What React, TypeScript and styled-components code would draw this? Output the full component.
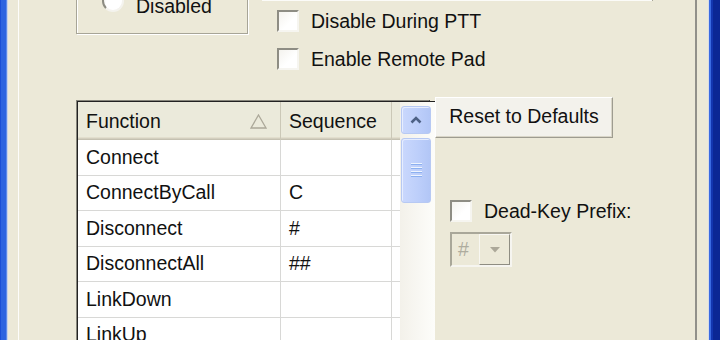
import styled, { createGlobalStyle } from 'styled-components'

const GlobalStyle = createGlobalStyle`
  html, body {
    margin: 0;
    padding: 0;
    background: #ece9d8;
  }
  body {
    font-family: "Liberation Sans", Arial, sans-serif;
    font-size: 19.5px;
    color: #111;
  }
`

const rows = [
  { name: 'Connect', seq: '' },
  { name: 'ConnectByCall', seq: 'C' },
  { name: 'Disconnect', seq: '#' },
  { name: 'DisconnectAll', seq: '##' },
  { name: 'LinkDown', seq: '' },
  { name: 'LinkUp', seq: '' },
]

export default function App() {
  return <>
    <GlobalStyle />
    <Window>
      <LeftFrame />
      <Client>
        <TabPage>
          <TopRow>
            <GroupBox>
              <RadioRow>
                <Radio />
                <Label $shift={5}>Disabled</Label>
              </RadioRow>
            </GroupBox>

            <OptionsGroup>
              <GroupEdge />
              <CheckList>
                <CheckRow>
                  <CheckBox />
                  <Label>Disable During PTT</Label>
                </CheckRow>
                <CheckRow>
                  <CheckBox />
                  <Label>Enable Remote Pad</Label>
                </CheckRow>
              </CheckList>
            </OptionsGroup>
          </TopRow>

          <BottomRow>
            <ListFrame>
              <ListInner>
                <ListBody>
                  <Header>
                    <HeaderCell $divider>
                      Function
                      <SortArrow width="17" height="15" viewBox="0 0 17 15">
                        <polygon points="8.5,1 16,14 1,14" fill="none" stroke="#aca899" strokeWidth="1.3" />
                      </SortArrow>
                    </HeaderCell>
                    <HeaderCell $divider>Sequence</HeaderCell>
                    <HeaderCell />
                  </Header>

                  {rows.map(row => (
                    <Row key={row.name}>
                      <Cell $line>{row.name}</Cell>
                      <Cell $line>{row.seq}</Cell>
                      <Cell />
                    </Row>
                  ))}
                </ListBody>

                <ScrollBar>
                  <ScrollButton>
                    <svg width="12" height="8" viewBox="0 0 12 8">
                      <polyline points="1.5,6.5 6,2 10.5,6.5" fill="none" stroke="#4d6185" strokeWidth="2.6" />
                    </svg>
                  </ScrollButton>
                  <Thumb>
                    <Grip />
                    <Grip />
                    <Grip />
                    <Grip />
                  </Thumb>
                </ScrollBar>
              </ListInner>
            </ListFrame>

            <SideColumn>
              <Button>Reset to Defaults</Button>

              <CheckRow $indent={15} $top={62}>
                <CheckBox />
                <Label>Dead-Key Prefix:</Label>
              </CheckRow>

              <Combo>
                <ComboText>#</ComboText>
                <DropButton>
                  <svg width="10" height="6" viewBox="0 0 10 6">
                    <polygon points="0,0 10,0 5,5.5" fill="#aca899" />
                  </svg>
                </DropButton>
              </Combo>
            </SideColumn>
          </BottomRow>
        </TabPage>
      </Client>
      <RightFrame />
    </Window>
  </>
}

const Window = styled.div`
  display: flex;
  width: 720px;
  height: 340px;
  overflow: hidden;
`

const LeftFrame = styled.div`
  width: 8px;
  background: linear-gradient(to right, #1b4fd6 0 1px, #2d64e0 1px 6px, #5d8be8 6px 7px, #c9d3ea 7px 8px);
`

const RightFrame = styled.div`
  width: 12px;
  background: linear-gradient(to right, #d6dbe8 0 1px, #3a6be2 1px 3px, #1236b0 3px 5px, #0b2795 5px);
`

const Client = styled.div`
  flex: 1;
  display: flex;
  padding: 0 11px 0 10px;
  background: #ece9d8;
`

const TabPage = styled.div`
  flex: 1;
  display: flex;
  flex-direction: column;
  border-left: 1px solid #fdfdfb;
  border-right: 2px solid #91908a;
  background: #ece9d8;
  overflow: hidden;
`

const TopRow = styled.div`
  display: flex;
  flex: none;
  align-items: flex-start;
  height: 97px;
  padding-left: 57px;
`

const GroupBox = styled.div`
  box-sizing: border-box;
  display: flex;
  flex-direction: column;
  justify-content: flex-end;
  width: 172px;
  height: 64px;
  margin-top: -30px;
  padding: 0 0 16px 25px;
  border: 1px solid #a7a597;
  box-shadow: inset 1px 1px 0 #fff, 1px 1px 0 #fff;
`

const RadioRow = styled.div`
  display: flex;
  align-items: flex-start;
  gap: 12px;
`

const Radio = styled.div`
  box-sizing: border-box;
  width: 22px;
  height: 22px;
  border-radius: 50%;
  border: 2px solid;
  border-color: #8d8c82 #f4f3ee #f4f3ee #8d8c82;
  background: radial-gradient(circle at 60% 65%, #fff 0 55%, #dcdad0 100%);
`

const Label = styled.span<{ $shift?: number }>`
  line-height: 22px;
  white-space: nowrap;
  margin-top: ${p => p.$shift ?? 0}px;
`

const OptionsGroup = styled.div`
  display: flex;
  flex-direction: column;
  width: 391px;
  margin-left: 14px;
`

const GroupEdge = styled.div`
  height: 1px;
  background: #fbfbf8;
  border-right: 1px solid #a7a597;
`

const CheckList = styled.div`
  display: flex;
  flex-direction: column;
  gap: 16px;
  margin-top: 9px;
  padding-left: 15px;
`

const CheckRow = styled.div<{ $indent?: number; $top?: number }>`
  display: flex;
  align-items: center;
  gap: 12px;
  height: 22px;
  margin-left: ${p => p.$indent ?? 0}px;
  margin-top: ${p => p.$top ?? 0}px;
`

const CheckBox = styled.div`
  box-sizing: border-box;
  flex: none;
  width: 22px;
  height: 22px;
  border: 2px solid;
  border-color: #8e8d84 #f6f5f0 #f6f5f0 #8e8d84;
  background: linear-gradient(135deg, #f4f3ee, #fff 60%);
`

const BottomRow = styled.div`
  display: flex;
  flex: none;
  align-items: flex-start;
  padding-left: 57px;
`

const ListFrame = styled.div`
  box-sizing: border-box;
  display: flex;
  width: 354px;
  height: 260px;
  margin-top: 3px;
  border-left: 1px solid #86857b;
  border-top: 1px solid #86857b;
  border-right: 1px solid #1a1a1a;
`

const ListInner = styled.div`
  flex: 1;
  display: flex;
  border-left: 1px solid #222;
  border-top: 1px solid #222;
`

const ListBody = styled.div`
  flex: 1;
  background: #fff;
`

const Header = styled.div`
  box-sizing: border-box;
  display: grid;
  grid-template-columns: 203px 111px 1fr;
  height: 38px;
  background: #ebeadb;
  box-shadow: inset 0 -1px 0 #c5c1b1, inset 0 -2px 0 #d3cfbf, inset 0 -3px 0 #e2decd;
`

const HeaderCell = styled.div<{ $divider?: boolean }>`
  display: flex;
  align-items: center;
  padding: 1px 0 0 8px;
  border-right: ${p => p.$divider ? '1px solid #cbc8b7' : 'none'};
`

const SortArrow = styled.svg`
  margin-left: auto;
  margin-right: 13px;
`

const Row = styled.div`
  box-sizing: border-box;
  display: grid;
  grid-template-columns: 203px 111px 1fr;
  height: 35.5px;
  border-bottom: 1px solid #d8d8d6;
`

const Cell = styled.div<{ $line?: boolean }>`
  display: flex;
  align-items: center;
  padding-left: 8px;
  white-space: nowrap;
  border-right: ${p => p.$line ? '1px solid #d8d8d6' : 'none'};
`

const ScrollBar = styled.div`
  display: flex;
  flex-direction: column;
  width: 35px;
  background: linear-gradient(to right, #f3f1ea, #fdfdfa);
`

const blueButton = `
  box-sizing: border-box;
  width: 30px;
  margin-left: 1px;
  border: 1px solid #b7c9f3;
  border-radius: 3px;
  background: linear-gradient(to right, #cad8fd, #bccefa 60%, #b2c6f6);
  box-shadow: inset 1px 1px 0 #e6edff;
`

const ScrollButton = styled.div`
  ${blueButton}
  display: flex;
  align-items: center;
  justify-content: center;
  height: 28px;
  margin-top: 4px;
`

const Thumb = styled.div`
  ${blueButton}
  display: flex;
  flex-direction: column;
  align-items: center;
  justify-content: center;
  gap: 1px;
  height: 65px;
  margin-top: 4px;
`

const Grip = styled.div`
  width: 11px;
  height: 2px;
  background: linear-gradient(#eef4fe 0 1px, #8cb0f0 1px 2px);
  margin-bottom: 1px;
`

const SideColumn = styled.div`
  display: flex;
  flex-direction: column;
  align-items: flex-start;
  margin-left: 5px;
`

const Button = styled.button`
  box-sizing: border-box;
  width: 178px;
  height: 41px;
  padding: 0 0 2px;
  font: inherit;
  color: #111;
  background: #f3f2ec;
  border: 1px solid;
  border-color: #fff #9e9c90 #9e9c90 #fff;
  box-shadow: inset -1px -1px 0 #d9d6c8;
  border-radius: 0;
`

const Combo = styled.div`
  box-sizing: border-box;
  display: flex;
  width: 62px;
  height: 35px;
  margin: 10px 0 0 15px;
  border: 2px solid;
  border-color: #a9a799 #f6f5f0 #f6f5f0 #a9a799;
  background: #ece9d8;
`

const ComboText = styled.span`
  flex: 1;
  display: flex;
  align-items: center;
  padding-left: 6px;
  color: #aeac9e;
`

const DropButton = styled.div`
  box-sizing: border-box;
  display: flex;
  align-items: center;
  justify-content: center;
  width: 31px;
  border: 1px solid;
  border-color: #f8f7f2 #8f8d82 #8f8d82 #f8f7f2;
  background: #ece9d8;
`
